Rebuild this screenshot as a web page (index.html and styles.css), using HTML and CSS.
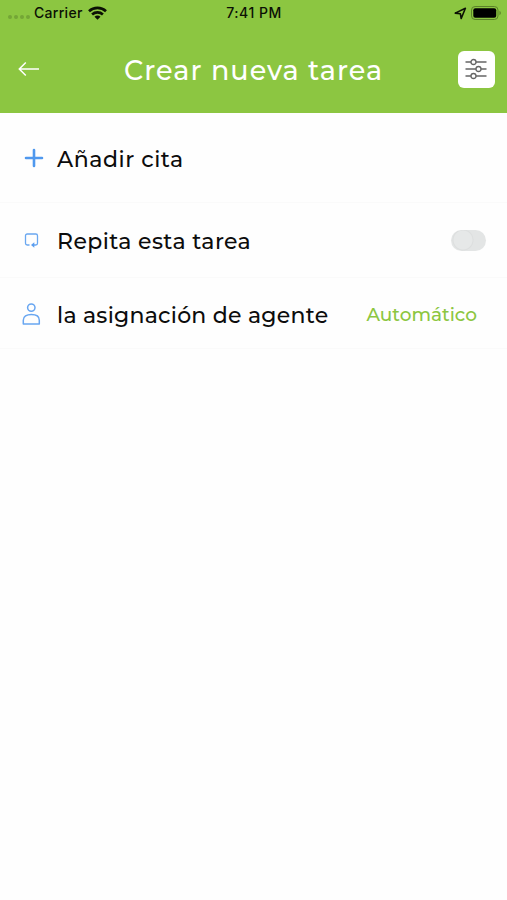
FILE: index.html
```html
<!DOCTYPE html>
<html lang="es">

<head>
    <meta charset="UTF-8">
    <title>Crear nueva tarea</title>
    <link rel="stylesheet" href="styles.css">
</head>

<body>
    <header>
        <div class="status">
            <div class="carrier">
                <span class="dots"><i></i><i></i><i></i><i></i></span>
                <span class="name">Carrier</span>
                <svg width="19" height="14" viewBox="0 0 19 14">
                    <g fill="none" stroke="#0b1004" stroke-width="2.6">
                        <path d="M1 5.2C5.7.7 13.3.7 18 5.2" />
                        <path d="M4.1 8.5c3-2.8 7.8-2.8 10.8 0" />
                    </g>
                    <path fill="#0b1004" d="M6.5 10.7c1.7-1.5 4.3-1.5 6 0l-3 3z" />
                </svg>
            </div>
            <span class="time">7:41 PM</span>
            <div class="battery">
                <svg width="13" height="13" viewBox="0 0 13 13">
                    <path d="M1.2 6.1 11.4 1.3 7.2 11.5 6.4 6.8z" fill="none" stroke="#0b1004" stroke-width="1.6" stroke-linejoin="round" />
                </svg>
                <svg width="31" height="14" viewBox="0 0 31 14">
                    <rect x=".5" y=".5" width="26.5" height="13" rx="3.6" fill="none" stroke="#5b8228" />
                    <rect x="2.3" y="2.2" width="22.9" height="9.6" rx="2" fill="#000" />
                    <path d="M28.5 4.8c1.8.7 1.8 3.7 0 4.4z" fill="#5b8228" />
                </svg>
            </div>
        </div>
        <div class="titulo">
            <svg class="back" width="22" height="16" viewBox="0 0 22 16">
                <path d="M21 8H1.5M7.8 1.5 1.3 8l6.5 6.5" fill="none" stroke="#fff" stroke-width="1.5" />
            </svg>
            <h1>Crear nueva tarea</h1>
            <button class="filtro">
                <svg width="22" height="22" viewBox="0 0 22 22" fill="none" stroke="#666" stroke-width="1.3">
                    <path d="M.5 4H6M11 4h10.500M.5 11H11M16 11h5.500M.5 18H6M11 18h10.500" />
                    <circle cx="8.500" cy="4" r="2.500" />
                    <circle cx="13.500" cy="11" r="2.500" />
                    <circle cx="8.500" cy="18" r="2.500" />
                </svg>
            </button>
        </div>
    </header>

    <main>
        <div class="fila cita">
            <svg class="icono" width="24" height="24" viewBox="0 0 24 24">
                <path d="M14 4v16M6 12h16" fill="none" stroke="#4f98ee" stroke-width="2.600" stroke-linecap="round" />
            </svg>
            <span class="texto t-cita">Añadir cita</span>
        </div>
        <div class="fila repetir">
            <svg class="icono" width="24" height="24" viewBox="0 0 24 24" fill="none" stroke="#6aa7f0">
                <path d="M9.500 16H7.200a1.700 1.700 0 0 1-1.700-1.700V6.700c0-1 .7-1.700 1.700-1.700h8.600c1 0 1.700.7 1.700 1.700v7.600c0 1-.7 1.700-1.700 1.700h-2.600" stroke-width="1.300" />
                <path d="M14.300 13.200 11 16l3.300 2.800z" fill="#5a9df0" stroke="none" />
            </svg>
            <span class="texto t-repetir">Repita esta tarea</span>
            <span class="switch"></span>
        </div>
        <div class="fila agente">
            <svg class="icono" width="24" height="24" viewBox="0 0 24 24" fill="none" stroke="#68a6f1" stroke-width="1.500">
                <circle cx="11.300" cy="5.600" r="3.700" />
                <path d="M3.300 22v-3.800c0-3.700 3.300-5.700 8-5.700s8 2 8 5.700V22z" stroke-linejoin="round" />
            </svg>
            <span class="texto t-agente">la asignación de agente</span>
            <span class="valor">Automático</span>
        </div>
    </main>
</body>

</html>
```
FILE: styles.css
```css
* {
    box-sizing: border-box;
}

body {
    margin: 0;
    background-color: #fefefe;
    font-family: Montserrat, Inter, sans-serif;
}

svg {
    display: block;
    flex-shrink: 0;
}

header {
    height: 113px;
    background-color: #8cc641;
}

.status {
    display: grid;
    grid-template-columns: 1fr auto 1fr;
    align-items: center;
    height: 26px;
    padding: 0 5px 0 8px;
    color: #0b1004;
    font: 500 14px/26px Inter, sans-serif;
    letter-spacing: .3px;
}

.carrier,
.battery {
    display: flex;
    align-items: center;
}

.dots {
    display: flex;
    gap: 2px;
    width: 26px;
    padding-top: 8px;
}

.dots i {
    width: 4px;
    height: 4px;
    border-radius: 50%;
    background-color: #74a636;
}

.name {
    width: 54px;
}

.time {
    margin-left: -2px;
    letter-spacing: .5px;
}

.battery {
    justify-content: flex-end;
    gap: 4px;
}

.titulo {
    display: flex;
    align-items: center;
    height: 87px;
    padding: 0 12px 1px 18px;
}

h1 {
    margin: 2px 0 0 84px;
    color: #fff;
    font-size: 27px;
    font-weight: 500;
    letter-spacing: 1.05px;
    white-space: nowrap;
}

.filtro {
    display: flex;
    align-items: center;
    justify-content: center;
    width: 37px;
    height: 37px;
    margin-left: auto;
    padding: 0 1px 1px 0;
    border: 0;
    border-radius: 6px;
    background-color: #fff;
}

.fila {
    display: flex;
    align-items: center;
    padding: 0 21px 0 20px;
    border-bottom: 1px solid #fafafa;
}

.cita {
    height: 90px;
    padding-top: 1px;
}

.repetir {
    height: 75px;
    padding-top: 1px;
}

.agente {
    height: 71px;
    padding-top: 2px;
}

.icono {
    margin-right: 13px;
}

.texto {
    padding-top: 2px;
    color: #0c0c0c;
    font-size: 22px;
    font-weight: 500;
    white-space: nowrap;
}

.t-cita {
    letter-spacing: .55px;
}

.t-repetir {
    letter-spacing: .4px;
}

.t-agente {
    letter-spacing: .25px;
}

.switch {
    width: 35px;
    height: 21px;
    margin-left: auto;
    border-radius: 11px;
    background: radial-gradient(circle at 12px 10px, #e6e8e8 9px, #dcdede 10px, #e3e5e5 11px);
}

.valor {
    margin: 0 9px 0 auto;
    color: #8cc641;
    font-size: 18.5px;
    font-weight: 500;
}
```
